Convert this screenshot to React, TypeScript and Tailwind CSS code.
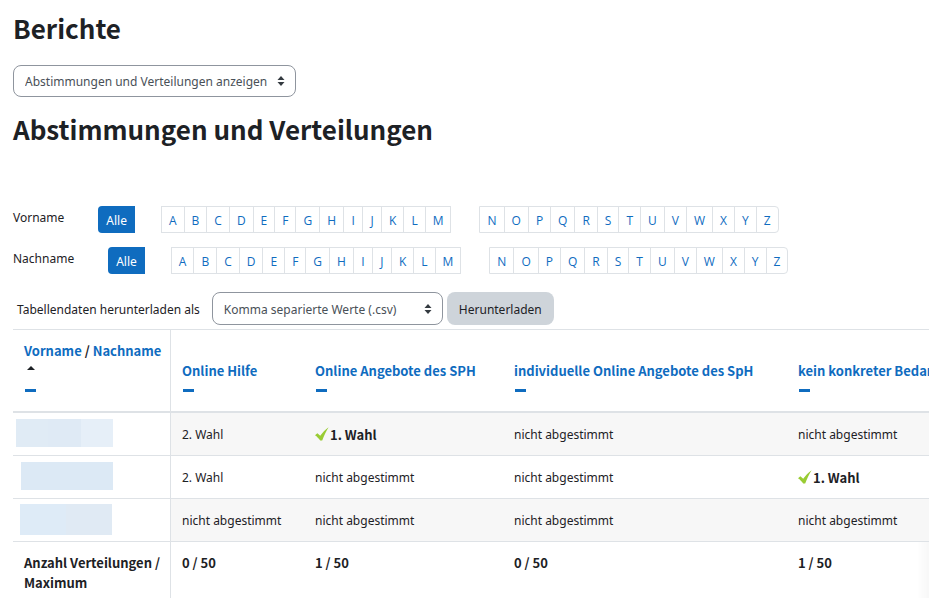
import { useState } from "react";
import clsx from "clsx";

const firstHalf = "ABCDEFGHIJKLM".split("");
const secondHalf = "NOPQRSTUVWXYZ".split("");

const options = ["Online Hilfe", "Online Angebote des SPH", "individuelle Online Angebote des SpH", "kein konkreter Bedarf"];

type Vote = { label: string; allocated?: boolean };

const none: Vote = { label: "nicht abgestimmt" };

const rows: { id: number; name: React.ReactNode; votes: Vote[] }[] = [
  {
    id: 1,
    name: (
      <span className="ml-[3px] flex h-7 w-[97px]">
        <span className="w-8 bg-[#e0ebf5]" />
        <span className="w-[33px] bg-[#dfeaf5]" />
        <span className="w-8 bg-[#e6eff8]" />
      </span>
    ),
    votes: [{ label: "2. Wahl" }, { label: "1. Wahl", allocated: true }, none, none],
  },
  {
    id: 2,
    name: <span className="ml-2 flex h-7 w-[92px] bg-[#dce9f5]" />,
    votes: [{ label: "2. Wahl" }, none, none, { label: "1. Wahl", allocated: true }],
  },
  {
    id: 3,
    name: (
      <span className="ml-[7px] flex h-[31px] w-[92px]">
        <span className="w-[46px] bg-[#deebf7]" />
        <span className="w-[46px] bg-[#e0eaf4]" />
      </span>
    ),
    votes: [none, none, none, none],
  },
];

const totals = ["0 / 50", "1 / 50", "0 / 50", "1 / 50"];

const SortArrows = () => (
  <svg viewBox="0 0 8 10" className="pointer-events-none absolute right-[11px] top-1/2 h-[10px] w-2 -translate-y-1/2 fill-[#343a40]">
    <path d="M4 0 0.5 4h7zM4 10 0.5 6h7z" />
  </svg>
);

const Tick = () => (
  <svg viewBox="0 0 14 14" className="mb-[3px] mr-px h-[14px] w-[14px] shrink-0">
    <path d="M0 8.2 2.4 6.2 5.2 8.8 C7.6 5.4 10 2.6 13.6 0.2 C11.2 4.2 9 8.6 7.2 13.6 L5.2 13.6 C3.8 11.4 2 9.6 0 8.2Z" fill="#99cc33" />
  </svg>
);

const Letters = ({ letters, last }: { letters: string[]; last?: boolean }) => (
  <ul className={clsx("flex border border-[#dee2e6] font-['Open_Sans',sans-serif]", last && "rounded-r")}>
    {letters.map((letter) => (
      <li key={letter} className="border-l border-[#dee2e6] first:border-l-0">
        <a href={`#${letter}`} className="block min-w-[18px] px-[7px] pt-1 text-center text-[#0f6cbf]">
          {letter}
        </a>
      </li>
    ))}
  </ul>
);

const InitialsBar = ({ label }: { label: string }) => (
  <div className="flex h-[27px] items-stretch">
    <span className="mr-[34px] leading-6">{label}</span>
    <a href="#alle" className="mr-[26px] rounded-l-sm bg-[#0f6cbf] px-2 pt-[5px] text-white">
      Alle
    </a>
    <div className="flex gap-7">
      <Letters letters={firstHalf} />
      <Letters letters={secondHalf} last />
    </div>
  </div>
);

const Hide = ({ label }: { label: string }) => (
  <a href="#hide" aria-label={`${label} verbergen`} className="flex h-[19px] items-center pl-px">
    <span className="h-[3px] w-[11px] bg-[#0f6cbf]" />
  </a>
);

const App = () => {
  const [report, setReport] = useState("votes");
  const [format, setFormat] = useState("csv");

  return (
    <main className="overflow-hidden bg-white pl-[13px] font-['Noto_Sans','Open_Sans',sans-serif] text-xs leading-5 text-[#1d2125]">
      <h1 className="pt-3 font-['Noto_Sans_CJK_SC',sans-serif] text-[26px] font-bold leading-8">Berichte</h1>

      <div className="relative mt-[21px] w-fit">
        <select
          aria-label="Bericht"
          value={report}
          onChange={(e) => setReport(e.target.value)}
          className="h-8 w-[283px] appearance-none rounded-lg border border-[#8f959e] bg-white pl-[11px] pr-6 pt-0.5 text-[#495057]"
        >
          <option value="votes">Abstimmungen und Verteilungen anzeigen</option>
        </select>
        <SortArrows />
      </div>

      <h2 className="mt-4 font-['Noto_Sans_CJK_SC',sans-serif] text-[26px] font-bold leading-8">Abstimmungen und Verteilungen</h2>

      <div className="mt-[61px] flex flex-col gap-[14px]">
        <InitialsBar label="Vorname" />
        <InitialsBar label="Nachname" />
      </div>

      <form className="mt-[18px] flex items-center pl-1" onSubmit={(e) => e.preventDefault()}>
        <label htmlFor="format" className="mr-3 pt-0.5">
          Tabellendaten herunterladen als
        </label>
        <div className="relative mr-1">
          <select
            id="format"
            value={format}
            onChange={(e) => setFormat(e.target.value)}
            className="h-[33px] w-[231px] appearance-none rounded-lg border border-[#8f959e] bg-white pl-[11px] pr-6 pt-0.5 text-[#495057]"
          >
            <option value="csv">Komma separierte Werte (.csv)</option>
          </select>
          <SortArrows />
        </div>
        <button type="submit" className="h-[33px] rounded-lg bg-[#ced4da] px-3 pt-0.5">
          Herunterladen
        </button>
      </form>

      <div className="mt-1 overflow-hidden">
        <table className="w-[1000px] table-fixed border-separate border-spacing-0 text-left">
          <colgroup>
            <col className="w-[158px]" />
            <col className="w-[133px]" />
            <col className="w-[199px]" />
            <col className="w-[284px]" />
            <col />
          </colgroup>
          <thead className="font-['Noto_Sans_CJK_SC',sans-serif] text-[13px] font-bold">
            <tr className="align-bottom">
              <th className="whitespace-nowrap border-b-2 border-r border-t border-[#dee2e6] py-[11px] pl-[11px]">
                <a href="#vorname" className="text-[#0f6cbf]">Vorname</a> /{" "}
                <a href="#nachname" className="text-[#0f6cbf]">Nachname</a>
                <span className="flex h-5 pl-[3px] pt-[5px]">
                  <svg viewBox="0 0 8 4" className="h-1 w-2 fill-[#1d2125]">
                    <path d="M4 0 8 4H0z" />
                  </svg>
                </span>
                <Hide label="Name" />
              </th>
              {options.map((option) => (
                <th key={option} className="whitespace-nowrap border-b-2 border-t border-[#dee2e6] py-[11px] pl-[11px]">
                  <a href="#option" className="text-[#0f6cbf]">{option}</a>
                  <Hide label={option} />
                </th>
              ))}
            </tr>
          </thead>
          <tbody>
            {rows.map((row) => (
              <tr key={row.id} className="group h-[43px]">
                <td className="border-b border-r border-[#dee2e6] pb-0.5">{row.name}</td>
                {row.votes.map((vote, i) => (
                  <td key={i} className="border-b border-[#dee2e6] pl-[11px] pt-0.5 group-odd:bg-[#f7f7f7]">
                    {vote.allocated ? (
                      <span className="flex items-center font-['Noto_Sans_CJK_SC',sans-serif] text-[13px] font-bold">
                        <Tick />
                        {vote.label}
                      </span>
                    ) : (
                      vote.label
                    )}
                  </td>
                ))}
              </tr>
            ))}
            <tr className="align-top font-['Noto_Sans_CJK_SC',sans-serif] text-[13px] font-bold">
              <td className="border-r border-[#dee2e6] py-[11px] pl-[11px]">Anzahl Verteilungen / Maximum</td>
              {totals.map((total, i) => (
                <td key={i} className="py-[11px] pl-[11px]">{total}</td>
              ))}
            </tr>
          </tbody>
        </table>
      </div>

      <div className="pointer-events-none fixed bottom-0 right-0 h-14 w-3 bg-linear-to-r from-transparent to-black/3" />
    </main>
  );
};

export default App;
